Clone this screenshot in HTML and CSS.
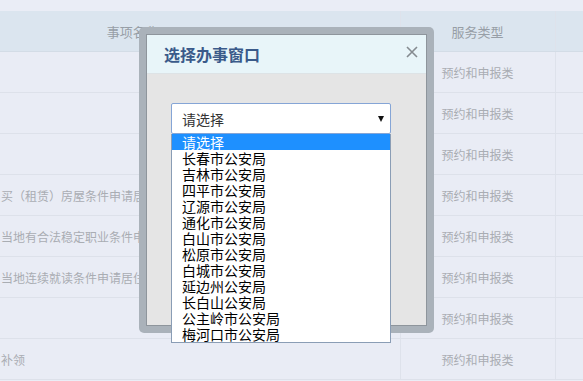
FILE: index.html
```html
<!DOCTYPE html>
<html lang="zh-CN">
<head>
<meta charset="utf-8">
<title>选择办事窗口</title>
<link rel="stylesheet" href="styles.css">
</head>
<body>
<div class="page">
  <table class="grid">
    <colgroup>
      <col class="c-name">
      <col class="c-type">
      <col class="c-rest">
    </colgroup>
    <thead>
      <tr><th class="th-name">事项名称</th><th>服务类型</th><th></th></tr>
    </thead>
    <tbody>
      <tr><td class="name"></td><td class="type">预约和申报类</td><td></td></tr>
      <tr><td class="name"></td><td class="type">预约和申报类</td><td></td></tr>
      <tr><td class="name"></td><td class="type">预约和申报类</td><td></td></tr>
      <tr><td class="name">买（租赁）房屋条件申请居住证</td><td class="type">预约和申报类</td><td></td></tr>
      <tr><td class="name">当地有合法稳定职业条件申请居住证</td><td class="type">预约和申报类</td><td></td></tr>
      <tr><td class="name">当地连续就读条件申请居住证</td><td class="type">预约和申报类</td><td></td></tr>
      <tr><td class="name"></td><td class="type">预约和申报类</td><td></td></tr>
      <tr><td class="name">补领</td><td class="type">预约和申报类</td><td></td></tr>
    </tbody>
  </table>
</div>

<div class="modal-frame">
  <div class="dialog">
    <div class="dialog-head">
      <span class="dialog-title">选择办事窗口</span>
      <span class="dialog-close" aria-label="关闭">
        <svg width="12" height="12" viewBox="0 0 12 12"><path d="M1 1 L11 11 M11 1 L1 11" stroke="#858b90" stroke-width="1.6" fill="none"/></svg>
      </span>
    </div>
    <div class="dialog-body">
      <div class="combo">
        <div class="combo-box">
          <span class="combo-text">请选择</span>
          <span class="combo-arrow"></span>
        </div>
        <ul class="combo-list">
          <li class="opt selected">请选择</li>
          <li class="opt">长春市公安局</li>
          <li class="opt">吉林市公安局</li>
          <li class="opt">四平市公安局</li>
          <li class="opt">辽源市公安局</li>
          <li class="opt">通化市公安局</li>
          <li class="opt">白山市公安局</li>
          <li class="opt">松原市公安局</li>
          <li class="opt">白城市公安局</li>
          <li class="opt">延边州公安局</li>
          <li class="opt">长白山公安局</li>
          <li class="opt">公主岭市公安局</li>
          <li class="opt">梅河口市公安局</li>
        </ul>
      </div>
    </div>
  </div>
</div>
</body>
</html>
```

FILE: styles.css
```css
html, body {
  margin: 0;
  padding: 0;
}
body {
  width: 583px;
  height: 381px;
  overflow: hidden;
  background: #eaedf6;
  font-family: "Noto Sans CJK SC", "Noto Sans", sans-serif;
  position: relative;
}
.page {
  padding-top: 11px;
}
.grid {
  border-collapse: collapse;
  table-layout: fixed;
  width: 583px;
}
.c-name { width: 400px; }
.c-type { width: 155px; }
.c-rest { width: 28px; }

.grid th,
.grid td {
  height: 40px;
  padding: 0;
  border-bottom: 1px solid #dde1ea;
  white-space: nowrap;
  overflow: hidden;
  vertical-align: middle;
}
.grid th + th,
.grid td + td {
  border-left: 1px solid #dee2eb;
}
.grid thead th {
  background: #dbe5ef;
  color: #979ea6;
  font-weight: normal;
  font-size: 13px;
  text-align: center;
  border-bottom: 1px solid #d3dce6;
}
.grid thead th.th-name {
  padding-right: 134px;
}
.grid tbody td {
  background: #e9ecf5;
  color: #a9adb3;
  font-size: 12px;
}
.grid td.name {
  text-align: left;
  padding-left: 1px;
}
.grid td.type {
  text-align: center;
}

/* modal */
.modal-frame {
  position: absolute;
  left: 139px;
  top: 27px;
  width: 281px;
  height: 292px;
  padding: 7px;
  background: #aab2ba;
  border-radius: 5px;
}
.dialog {
  width: 279px;
  height: 290px;
  border: 1px solid #8e959c;
  background: #e5e5e5;
  display: flex;
  flex-direction: column;
}
.dialog-head {
  height: 38px;
  background: #e8f5f9;
  border-bottom: 1px solid #dde3e6;
  display: flex;
  align-items: center;
  justify-content: space-between;
  padding: 0 8px 0 17px;
}
.dialog-title {
  font-size: 16px;
  font-weight: bold;
  color: #3a5a8a;
}
.dialog-close {
  display: flex;
  width: 12px;
  height: 12px;
  margin-top: -5px;
}
.dialog-body {
  padding: 29px 0 0 24px;
}
.combo {
  position: relative;
  width: 220px;
}
.combo-box {
  box-sizing: border-box;
  height: 31px;
  background: #fff;
  border: 1px solid #85a5d6;
  border-radius: 2px;
  display: flex;
  align-items: center;
  justify-content: space-between;
  padding: 0 6px 0 10px;
}
.combo-text {
  font-size: 14px;
  color: #333;
}
.combo-arrow {
  width: 0;
  height: 0;
  border-left: 3.5px solid transparent;
  border-right: 3.5px solid transparent;
  border-top: 6px solid #111;
  margin-top: 1px;
}
.combo-list {
  position: absolute;
  left: 0;
  top: 31px;
  width: 220px;
  box-sizing: border-box;
  margin: 0;
  padding: 0;
  list-style: none;
  background: #fff;
  border: 1px solid #8a9db5;
  border-top: none;
}
.opt {
  height: 16px;
  line-height: 16px;
  font-size: 14px;
  color: #000;
  padding-left: 10px;
  white-space: nowrap;
}
.opt.selected {
  background: #1e90ff;
  color: #fff;
}
```
